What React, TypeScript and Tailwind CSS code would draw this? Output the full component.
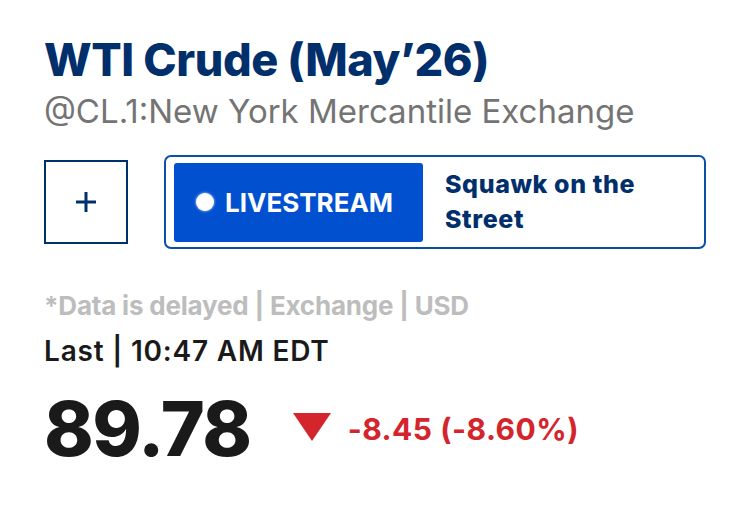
import React from "react";

export default function App() {
  return (
    <div
      className="w-[750px] h-[509px] bg-white px-[44px] pt-[31px]"
      style={{ fontFamily: "Inter, 'Liberation Sans', sans-serif" }}
    >
      {/* Header */}
      <h1 className="text-[45px] leading-[58px] font-extrabold tracking-[-0.4px] text-[#002f6c]">
        WTI Crude (May’26)
      </h1>
      <div className="text-[33px] leading-[42px] mt-[1px] text-[#747474]">
        @CL.1:New York Mercantile Exchange
      </div>

      {/* Actions */}
      <div className="flex items-center mt-[23px] gap-[36px]">
        <button className="w-[84px] h-[84px] border-2 border-[#002f6c] flex items-center justify-center text-[#002f6c]">
          <svg width="24" height="24" viewBox="0 0 24 24">
            <path d="M12 2v20M2 12h20" stroke="currentColor" strokeWidth="3" />
          </svg>
        </button>
        <div className="flex-1 h-[94px] border-2 border-[#0a4fa8] rounded-[7px] flex items-center px-[8px] gap-[22px]">
          <div className="w-[249px] h-[79px] bg-[#0050d0] rounded-[3px] flex items-center pl-[22px] gap-[11px]">
            <span className="w-[18px] h-[18px] rounded-full bg-white shadow-[0_0_3px_#cfe0ff]" />
            <span className="text-white font-bold text-[26px] tracking-[0px]">LIVESTREAM</span>
          </div>
          <div className="text-[#002f6c] font-extrabold text-[25px] leading-[35px] tracking-[0.6px]">
            Squawk on the
            <br />
            Street
          </div>
        </div>
      </div>

      {/* Quote info */}
      <div className="mt-[41px] text-[26px] leading-[32px] font-bold text-[#bdbdbd] tracking-[-0.2px]">
        *Data is delayed | Exchange | USD
      </div>
      <div className="mt-[13px] text-[28px] leading-[32px] font-semibold text-[#1a1a1a] tracking-[0.8px]">
        Last | 10:47 AM EDT
      </div>
      <div className="flex items-center mt-[20px]">
        <span className="text-[75px] leading-[84px] font-extrabold text-[#1a1a1a] tracking-[-1.5px]">89.78</span>
        <svg width="38" height="28" viewBox="0 0 38 28" className="ml-[42px] mt-[-4px]">
          <path d="M0 0h38L19 28z" fill="#d3252b" />
        </svg>
        <span className="ml-[17px] text-[30px] font-bold text-[#d3252b] tracking-[0.5px]">-8.45 (-8.60%)</span>
      </div>
    </div>
  );
}
